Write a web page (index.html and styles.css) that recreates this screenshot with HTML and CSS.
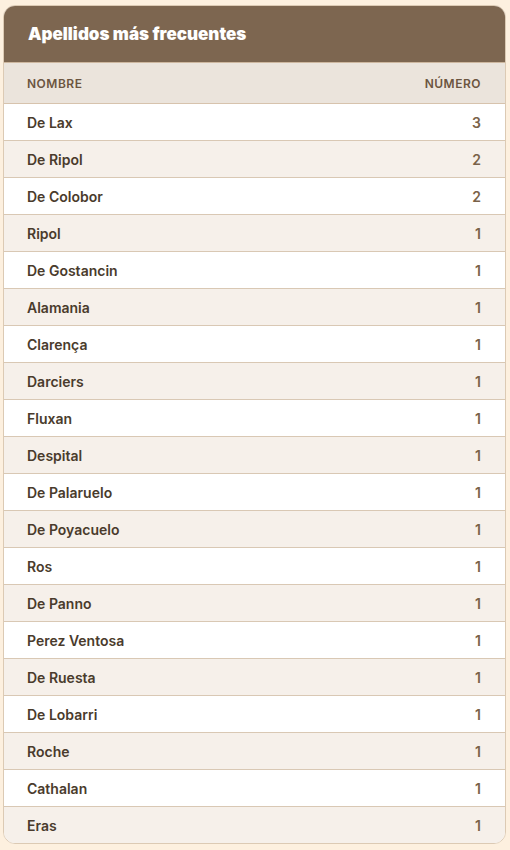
FILE: index.html
```html
<!DOCTYPE html>
<html lang="es">
<head>
    <meta charset="UTF-8">
    <meta name="viewport" content="width=device-width, initial-scale=1.0">
    <title>Apellidos más frecuentes</title>
    <link rel="stylesheet" href="styles.css">
</head>
<body>
    <section class="surname-card">
        <header class="surname-header">
            <h2>Apellidos más frecuentes</h2>
        </header>
        <table class="surname-table">
            <thead>
                <tr>
                    <th>Nombre</th>
                    <th class="num">Número</th>
                </tr>
            </thead>
            <tbody>
                <tr><td>De Lax</td><td class="num">3</td></tr>
                <tr><td>De Ripol</td><td class="num">2</td></tr>
                <tr><td>De Colobor</td><td class="num">2</td></tr>
                <tr><td>Ripol</td><td class="num">1</td></tr>
                <tr><td>De Gostancin</td><td class="num">1</td></tr>
                <tr><td>Alamania</td><td class="num">1</td></tr>
                <tr><td>Clarença</td><td class="num">1</td></tr>
                <tr><td>Darciers</td><td class="num">1</td></tr>
                <tr><td>Fluxan</td><td class="num">1</td></tr>
                <tr><td>Despital</td><td class="num">1</td></tr>
                <tr><td>De Palaruelo</td><td class="num">1</td></tr>
                <tr><td>De Poyacuelo</td><td class="num">1</td></tr>
                <tr><td>Ros</td><td class="num">1</td></tr>
                <tr><td>De Panno</td><td class="num">1</td></tr>
                <tr><td>Perez Ventosa</td><td class="num">1</td></tr>
                <tr><td>De Ruesta</td><td class="num">1</td></tr>
                <tr><td>De Lobarri</td><td class="num">1</td></tr>
                <tr><td>Roche</td><td class="num">1</td></tr>
                <tr><td>Cathalan</td><td class="num">1</td></tr>
                <tr><td>Eras</td><td class="num">1</td></tr>
            </tbody>
        </table>
    </section>
</body>
</html>
```

FILE: styles.css
```css
body {
    font-family: Inter, "Noto Sans", sans-serif;
    margin: 0;
    padding: 5px 4px 5px 3px;
    background: #fdf0df;
    color: #4a3b2c;
}
.surname-card {
    background: white;
    border: 1px solid #dccab4;
    border-radius: 12px;
    overflow: hidden;
}
.surname-header {
    background: #7d6650;
    padding: 0 24px;
    height: 56px;
    display: flex;
    align-items: center;
    border-bottom: 1px solid #cdb79f;
}
.surname-header h2 {
    margin: 0;
    color: white;
    font-size: 17px;
    font-weight: 900;
}
.surname-table {
    width: 100%;
    border-collapse: collapse;
}
.surname-table th {
    background: #ebe4dc;
    color: #6b5540;
    font-size: 12px;
    font-weight: 600;
    letter-spacing: 0.5px;
    text-transform: uppercase;
    text-align: left;
    height: 40px;
    padding: 0 24px 0 23px;
    border-bottom: 1px solid #d7c3ad;
}
.surname-table td {
    height: 36px;
    padding: 0 24px 0 23px;
    font-size: 14px;
    font-weight: 600;
    border-bottom: 1px solid #d9c8b4;
}
.surname-table tbody tr:nth-child(even) {
    background: #f6f0ea;
}
.surname-table tbody tr:last-child td {
    border-bottom: none;
}
.surname-table .num {
    text-align: right;
}
.surname-table td.num {
    color: #7a6248;
}
```
